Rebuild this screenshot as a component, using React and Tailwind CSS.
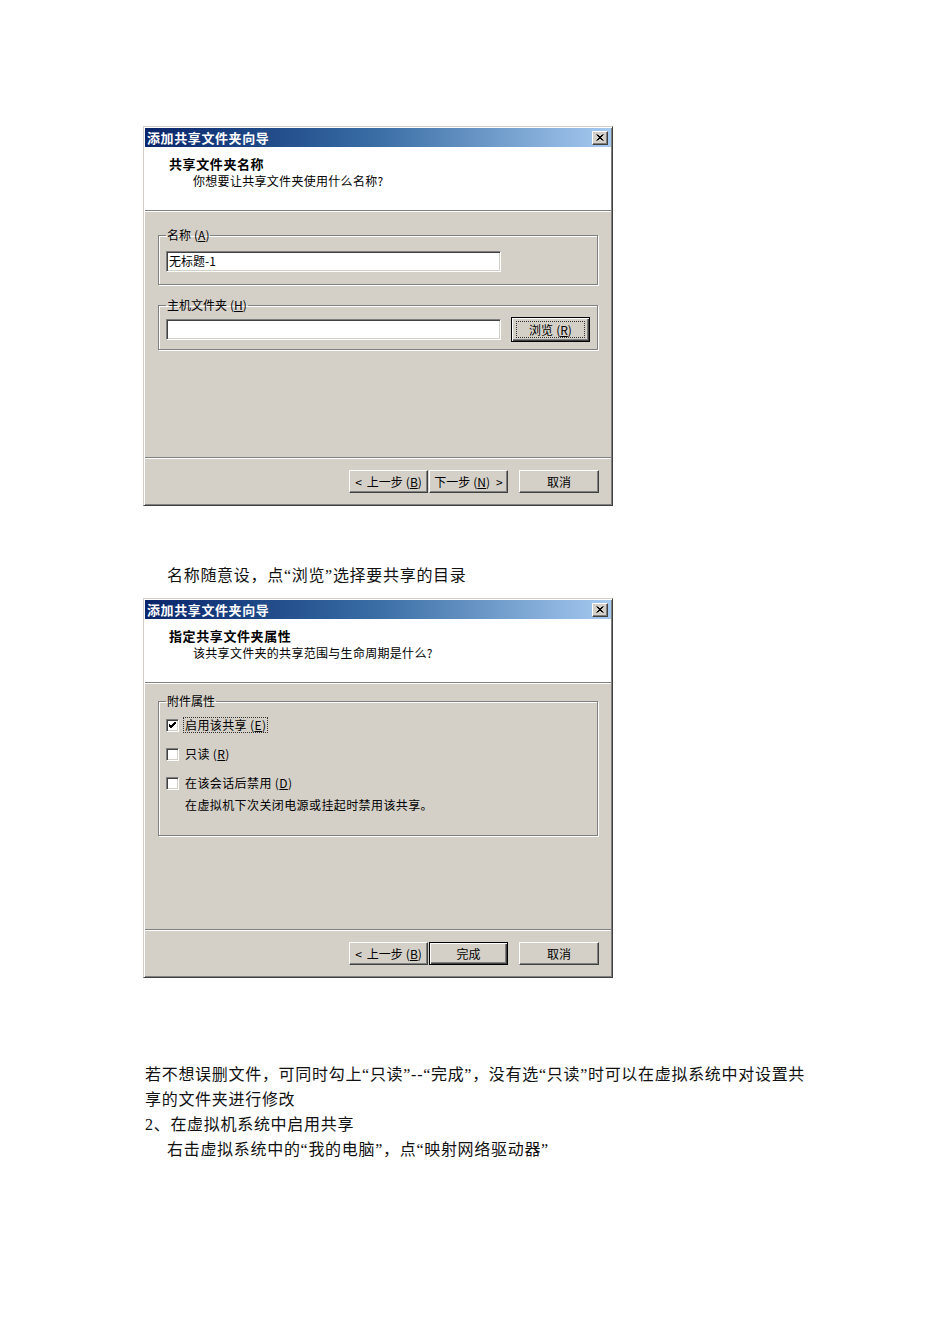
import React from 'react';

const ui = "font-['Noto_Sans_CJK_SC',sans-serif]";
const doc = "font-['Liberation_Serif','Noto_Sans_CJK_SC',serif]";

// Key letter in a mnemonic like "(A)"
const Key = ({ k }) => (
    <span className="ml-[3px]">(<span className="underline underline-offset-[1px]">{k}</span>)</span>
);

const Button = ({ children, primary, className = '' }) => (
    <div
        className={
            primary
                ? `h-[23px] flex items-center justify-center border border-black bg-[#d4d0c8] shadow-[inset_1px_1px_0_#fff,inset_-1px_-1px_0_#404040,inset_-2px_-2px_0_#808080] text-[12px] leading-none text-black ${className}`
                : `h-[23px] flex items-center justify-center border border-t-white border-l-white border-r-[#404040] border-b-[#404040] bg-[#d4d0c8] shadow-[inset_-1px_-1px_0_#808080] text-[12px] leading-none text-black ${className}`
        }
    >
        {children}
    </div>
);

const TextField = ({ value }) => (
    <div className="w-[335px] h-[21px] bg-white border border-t-[#808080] border-l-[#808080] border-b-white border-r-white shadow-[inset_1px_1px_0_#404040,inset_-1px_-1px_0_#d4d0c8] px-[2px] text-[12px] leading-[18px] text-black">
        {value}
    </div>
);

const Group = ({ label, className = '', children }) => (
    <fieldset className={`border border-[#808080] shadow-[1px_1px_0_#fff,inset_1px_1px_0_#fff] px-[7px] ${className}`}>
        <legend className="px-[1px] text-[12px] leading-[16px] text-black">{label}</legend>
        {children}
    </fieldset>
);

const CheckBox = ({ checked }) => (
    <div className="w-[13px] h-[13px] shrink-0 bg-white border border-t-[#808080] border-l-[#808080] border-b-white border-r-white shadow-[inset_1px_1px_0_#404040,inset_-1px_-1px_0_#d4d0c8] flex items-center justify-center">
        {checked && (
            <svg width="7" height="7" viewBox="0 0 7 7">
                <path d="M0 3 L2 5 L7 0 M0 4 L2 6 L7 1 M0 2 L2 4 L7 -1" stroke="#000" strokeWidth="1" fill="none" />
            </svg>
        )}
    </div>
);

const CheckRow = ({ checked, focused, children }) => (
    <div className="flex items-center h-[16px]">
        <CheckBox checked={checked} />
        <span
            className={
                focused
                    ? 'ml-[4px] px-[1px] border border-dotted border-[#333] text-[12px] leading-[14px] tracking-[0.4px] text-black'
                    : 'ml-[6px] text-[12px] leading-[16px] tracking-[0.4px] text-black'
            }
        >
            {children}
        </span>
    </div>
);

const Wizard = ({ heading, question, footer, children }) => (
    <div className={`w-[470px] h-[380px] flex flex-col bg-[#d4d0c8] border border-t-[#d4d0c8] border-l-[#d4d0c8] border-r-[#404040] border-b-[#404040] shadow-[inset_1px_1px_0_#fff,inset_-1px_-1px_0_#808080] p-[1px] ${ui}`}>
        {/* caption */}
        <div className="h-[19px] flex items-center justify-between bg-linear-to-r from-[#0a246a] via-[#3a6ea5] to-[#a6caf0] pl-[2px] pr-[3px]">
            <span className="text-white text-[13px] font-bold tracking-[0.6px] leading-none">添加共享文件夹向导</span>
            <div className="w-[16px] h-[14px] flex items-center justify-center bg-[#d4d0c8] border border-t-white border-l-white border-r-[#404040] border-b-[#404040] shadow-[inset_-1px_-1px_0_#808080]">
                <svg width="8" height="7" viewBox="0 0 8 7">
                    <path d="M0.5 0.5 L6.5 6.5 M1.5 0.5 L7.5 6.5 M6.5 0.5 L0.5 6.5 M7.5 0.5 L1.5 6.5" stroke="#000" strokeWidth="1" />
                </svg>
            </div>
        </div>

        {/* header */}
        <div className="h-[63px] bg-white pl-[24px] pt-[9px]">
            <div className="text-[13px] font-bold tracking-[0.6px] leading-[16px] text-black">{heading}</div>
            <div className="pl-[24px] text-[12px] leading-[17px] tracking-[0.3px] text-black">{question}</div>
        </div>
        <div className="h-px bg-[#808080]" />
        <div className="h-px bg-white" />

        <div className="flex-1 px-[13px]">{children}</div>

        <div className="h-px bg-[#808080]" />
        <div className="h-px bg-white" />
        <div className="flex justify-end pt-[11px] pb-[11px] pr-[12px]">{footer}</div>
    </div>
);

export default function App() {
    return (
        <div className="w-[950px] min-h-[1344px] bg-white pl-[143px] pt-[126px]">
            <Wizard
                heading="共享文件夹名称"
                question="你想要让共享文件夹使用什么名称?"
                footer={
                    <>
                        <Button className="w-[79px]">
                            <span className="mr-[5px]">&lt;</span>上一步<Key k="B" />
                        </Button>
                        <Button className="w-[79px] ml-px">
                            下一步<Key k="N" /><span className="ml-[6px]">&gt;</span>
                        </Button>
                        <Button className="w-[80px] ml-[11px]">取消</Button>
                    </>
                }
            >
                <Group label={<>名称<Key k="A" /></>} className="mt-[15px] pt-[8px] pb-[12px]">
                    <TextField value="无标题-1" />
                </Group>
                <Group label={<>主机文件夹<Key k="H" /></>} className="mt-[12px] pt-[4px] pb-[7px]">
                    <div className="flex items-center">
                        <TextField value="" />
                        <div className="ml-[10px] w-[79px] h-[25px] flex items-center justify-center border border-black bg-[#d4d0c8] shadow-[inset_1px_1px_0_#fff,inset_-1px_-1px_0_#404040,inset_-2px_-2px_0_#808080]">
                            <div className="w-[69px] h-[17px] border border-dotted border-[#333] flex items-center justify-center text-[12px] leading-none text-black">
                                浏览<Key k="R" />
                            </div>
                        </div>
                    </div>
                </Group>
            </Wizard>

            <p className={`${doc} ml-[24px] mt-[57px] text-[16px] leading-[25px] tracking-[0.7px] text-[#111]`}>
                名称随意设，点“浏览”选择要共享的目录
            </p>

            <div className="mt-[10px]">
                <Wizard
                    heading="指定共享文件夹属性"
                    question="该共享文件夹的共享范围与生命周期是什么?"
                    footer={
                        <>
                            <Button className="w-[79px]">
                                <span className="mr-[5px]">&lt;</span>上一步<Key k="B" />
                            </Button>
                            <Button primary className="w-[79px] ml-px">完成</Button>
                            <Button className="w-[80px] ml-[11px]">取消</Button>
                        </>
                    }
                >
                    <Group label="附件属性" className="mt-[9px] pt-[8px] pb-[22px]">
                        <div className="flex flex-col gap-[13px]">
                            <CheckRow checked focused>启用该共享<Key k="E" /></CheckRow>
                            <CheckRow>只读<Key k="R" /></CheckRow>
                            <CheckRow>在该会话后禁用<Key k="D" /></CheckRow>
                        </div>
                        <div className="mt-[6px] pl-[19px] text-[12px] leading-[16px] tracking-[0.4px] text-black">
                            在虚拟机下次关闭电源或挂起时禁用该共享。
                        </div>
                    </Group>
                </Wizard>
            </div>

            <div className={`${doc} ml-[2px] mt-[84px] w-[680px] text-[16px] leading-[25px] tracking-[0.7px] text-[#111]`}>
                <p>
                    若不想误删文件，可同时勾上“只读”--“完成”，没有选“只读”时可以在虚拟系统中对设置共
                    <br />
                    享的文件夹进行修改
                </p>
                <p>2、在虚拟机系统中启用共享</p>
                <p className="pl-[22px]">右击虚拟系统中的“我的电脑”，点“映射网络驱动器”</p>
            </div>
        </div>
    );
}
